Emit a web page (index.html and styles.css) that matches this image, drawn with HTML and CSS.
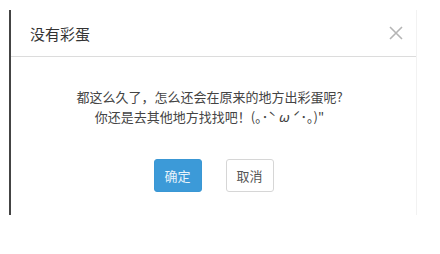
FILE: index.html
```html
<!DOCTYPE html>
<html>
<head>
<meta charset="utf-8">
<link rel="stylesheet" href="styles.css">
</head>
<body>
<div class="dialog">
  <div class="dialog-header">
    <span class="dialog-title">没有彩蛋</span>
    <svg class="close" width="14" height="14" viewBox="0 0 14 14"><path d="M1 1L13 13M13 1L1 13" stroke="#b5b5b5" stroke-width="1.6" fill="none"/></svg>
  </div>
  <div class="dialog-body">
    <p class="msg">都这么久了，怎么还会在原来的地方出彩蛋呢?<br>你还是去其他地方找找吧！(｡･ˋ <i>ω</i> ˊ･｡)"</p>
    <div class="actions">
      <button class="btn btn-primary">确定</button>
      <button class="btn btn-default">取消</button>
    </div>
  </div>
</div>
</body>
</html>
```
FILE: styles.css
```css
html, body {
  margin: 0;
  padding: 0;
  background: #ffffff;
}
body {
  font-family: "Noto Sans CJK SC", "Noto Sans", sans-serif;
  color: #333;
}
.dialog {
  margin: 10px 0 0 9px;
  width: 408px;
  box-sizing: border-box;
  border-left: 2px solid #444;
  border-right: 1px solid #f2f2f2;
}
.dialog-header {
  height: 46px;
  display: flex;
  align-items: center;
  justify-content: space-between;
  padding: 0 13px 0 19px;
  border-bottom: 1px solid #dcdcdc;
}
.dialog-title {
  font-size: 15px;
  color: #333;
}
.close {
  display: block;
}
.dialog-body {
  padding: 30px 0 23px;
  text-align: center;
}
.msg {
  margin: 0 8px 0 0;
  font-size: 13px;
  line-height: 20px;
  color: #444;
}
.msg i {
  font-family: "DejaVu Sans", sans-serif;
  font-style: italic;
}
.actions {
  margin-top: 31px;
  display: flex;
  justify-content: center;
  gap: 24px;
}
.btn {
  width: 48px;
  height: 33px;
  border-radius: 3px;
  font-family: inherit;
  font-size: 13px;
  padding: 0;
  cursor: pointer;
}
.btn-primary {
  background: #3c9ad8;
  border: 1px solid #3a97d4;
  color: #e8f3fb;
}
.btn-default {
  background: #fff;
  border: 1px solid #d6d6d6;
  color: #555;
}
```
